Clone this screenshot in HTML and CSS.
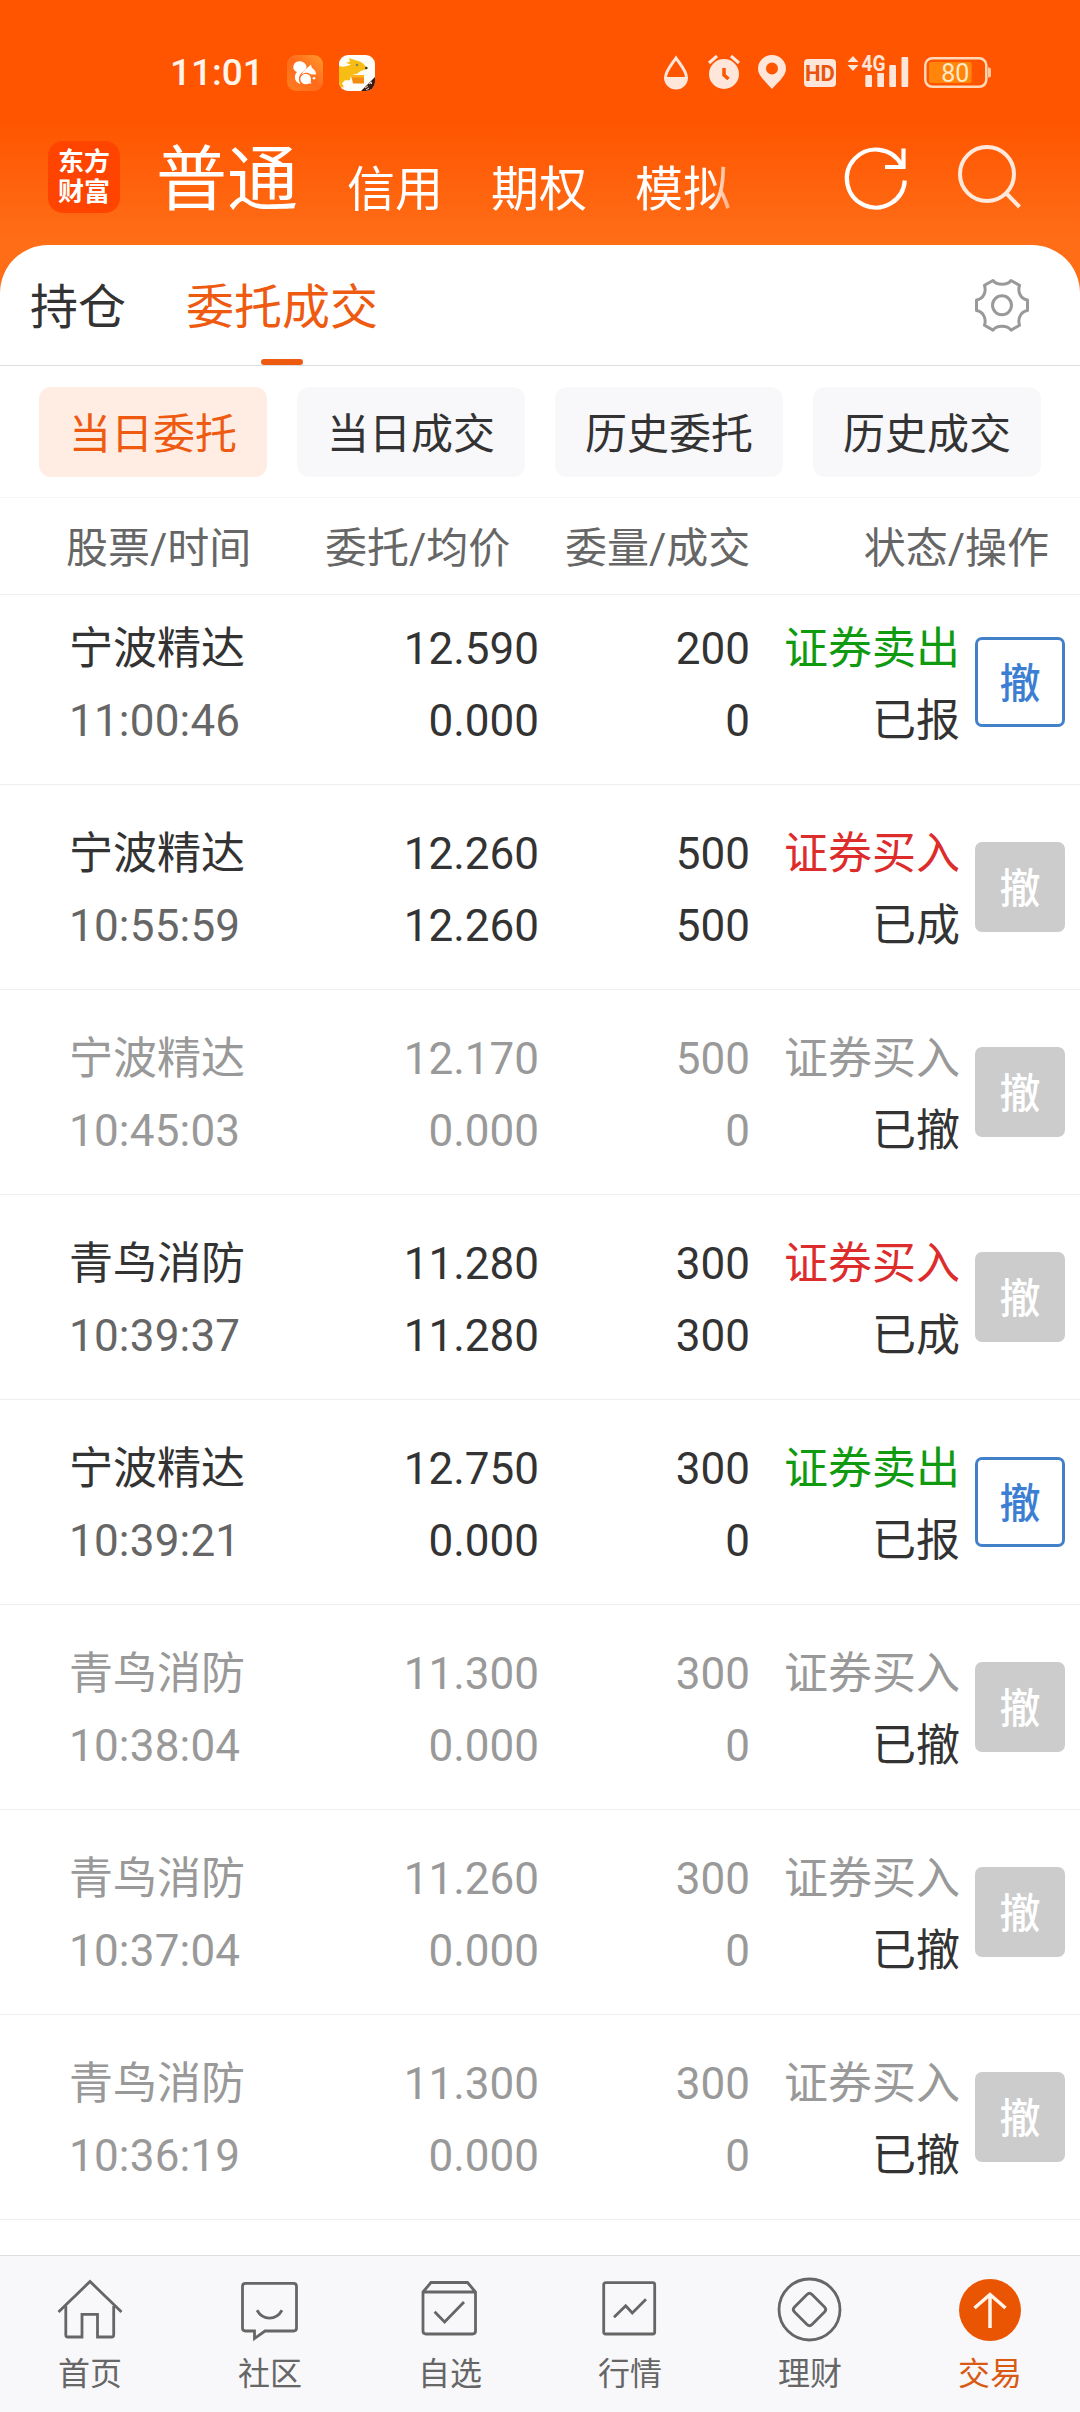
FILE: index.html
```html
<!DOCTYPE html>
<html lang="zh-CN">
<head>
    <meta charset="UTF-8">
    <meta name="viewport" content="width=device-width, initial-scale=1.0">
    <title>委托成交</title>
    <link rel="stylesheet" href="styles.css">
</head>
<body>
    <header>
        <div class="status-bar">
            <div class="status-left">
                <span class="clock">11:01</span>
                <svg class="app-icon" width="36" height="36" viewBox="0 0 36 36">
                    <defs>
                        <linearGradient id="uc" x1="1" y1="0" x2="0" y2="1">
                            <stop offset="0" stop-color="#ff9a2e"/>
                            <stop offset="0.5" stop-color="#ff6a1a"/>
                            <stop offset="1" stop-color="#ff7e20"/>
                        </linearGradient>
                    </defs>
                    <rect width="36" height="36" rx="9" fill="url(#uc)"/>
                    <path d="M6.500 14C5.500 9 9 6 13 6.300c4 .3 6.500 3.200 6.500 5.700-.5 4-8 6-7.500 12 0 2 .5 3.500 1.500 5C8 28 6 21 10 17c-1.500-.5-2.500-1.500-3.500-3z" fill="#fff"/>
                    <path d="M14.500 19.500C17 14.500 21 12.500 24 9.500c.3 2 .5 3 1.500 3.800 2 1.500 3.500 3 3.500 6.200h-5c-3-2.500-6-2.500-9.500 0z" fill="#fff"/>
                    <circle cx="18.700" cy="24" r="5.300" fill="#fff"/>
                    <path d="M18 24h5.500c1 1.500-.5 2.500 1 4.500H18z" fill="#fff"/>
                    <circle cx="27" cy="23.300" r="1.300" fill="#fff"/>
                </svg>
                <svg class="app-icon" width="36" height="36" viewBox="0 0 36 36">
                    <defs><clipPath id="tile"><rect width="36" height="36" rx="9"/></clipPath></defs>
                    <g clip-path="url(#tile)">
                        <rect width="36" height="36" fill="#fffdf8"/>
                        <path d="M0 11c4 1.500 7 .5 12-1.500L7 8l4-1.500-1-3.500 8 2.700c4 .5 7 3 10 7.500-2 2-4 2-6 2.500l-4 3-6 1.500-1 5H6l-3 3 2 4H0z" fill="#f8bd14"/>
                        <path d="M12 20h13v8.500H14z" fill="#f58a10"/>
                        <path d="M12 20h13v2.500H12z" fill="#ffb31b"/>
                        <circle cx="18" cy="10" r="1.300" fill="#8c8460"/>
                        <circle cx="27.300" cy="13" r="1.300" fill="#332"/>
                        <path d="M36 22v14H22z" fill="#3a1c12"/>
                        <path d="M26 33l3-2m-2 4l3-2m1-6l2 2m-3 0l3-2" stroke="#e8d9d0" stroke-width="1"/>
                    </g>
                </svg>
            </div>
            <div class="status-right">
                <svg width="328" height="36" viewBox="0 0 328 36" fill="#ffe6da">
                    <!-- drop -->
                    <path d="M13 3C9 9 2.500 16 2.500 22.500a10.500 10.500 0 0 0 21 0C23.500 16 17 9 13 3z" fill="none" stroke="#ffe6da" stroke-width="3"/>
                    <path d="M2 22h22a11 11 0 0 1-22 0z"/>
                    <!-- alarm -->
                    <circle cx="61" cy="19" r="15"/>
                    <path d="M46 8l8-7M76 8l-8-7" stroke="#ffe6da" stroke-width="3"/>
                    <path d="M61 13v7l4.500 4" fill="none" stroke="#ff5500" stroke-width="3.500"/>
                    <!-- location -->
                    <path fill-rule="evenodd" d="M109 34C104 28 95 21 95 14a14 14 0 0 1 28 0c0 7-9 14-14 20zM109 7.500a6 6 0 1 0 0 12 6 6 0 0 0 0-12z"/>
                    <!-- hd -->
                    <rect x="141" y="4" width="32" height="28" rx="4"/>
                    <text x="157" y="26" class="hd-text">HD</text>
                    <!-- signal -->
                    <path d="M190 1l5.500 6h-11zM190 16l5.500-6h-11z"/>
                    <text x="198.500" y="16" class="net-text" textLength="24" lengthAdjust="spacingAndGlyphs">4G</text>
                    <rect x="202.300" y="20" width="6.700" height="12" rx="1"/>
                    <rect x="214.300" y="18" width="6.700" height="14" rx="1"/>
                    <rect x="226.300" y="10" width="6.700" height="22" rx="1"/>
                    <rect x="238.500" y="2" width="6.700" height="30" rx="1"/>
                    <!-- battery -->
                    <rect x="262.300" y="3.300" width="61" height="28.500" rx="7" fill="none" stroke="#ffd9ba" stroke-width="2.500"/>
                    <rect x="266" y="7" width="42.700" height="21" rx="2" fill="#ff860a"/>
                    <path d="M325 12.500h1a2 2 0 0 1 2 2v6a2 2 0 0 1-2 2h-1z" fill="#ffc79e"/>
                    <text x="292.300" y="26.500" class="battery-text">80</text>
                </svg>
            </div>
        </div>
        <div class="account-bar">
            <div class="logo"><span>东方</span><span>财富</span></div>
            <nav class="account-nav">
                <a class="active">普通</a>
                <a>信用</a>
                <a>期权</a>
                <a>模拟</a>
            </nav>
            <svg class="refresh" width="66" height="66" viewBox="0 0 66 66" fill="none" stroke="#fff" stroke-width="4.200">
                <path d="M61.800 35.500A29 29 0 1 1 58.500 20"/>
                <path d="M60.500 3.500v18.500H42"/>
            </svg>
            <svg class="search" width="66" height="66" viewBox="0 0 66 66" fill="none" stroke="#ffe9dc" stroke-width="4">
                <circle cx="31" cy="31" r="27"/>
                <path d="M50 50l13.500 14"/>
            </svg>
        </div>
    </header>

    <main>
        <div class="tabs">
            <a>持仓</a>
            <a class="active">委托成交</a>
            <svg class="gear" width="58" height="58" viewBox="0 0 58 58" fill="none" stroke="#999" stroke-width="3" stroke-linejoin="round">
                <path d="M20 4.500C24 9.500 34 9.500 38 4.500L46.500 9.300C44.500 16 47.500 23 54.500 24V34.600C47.500 35.600 44.500 42.600 46.500 49.300L38 54.100C34 49.100 24 49.100 20 54.100L11.500 49.300C13.500 42.600 10.500 35.600 3.500 34.600V24C10.500 23 13.500 16 11.500 9.300Z"/>
                <circle cx="29" cy="29.300" r="9.500"/>
            </svg>
        </div>

        <div class="filters">
            <a class="active">当日委托</a>
            <a>当日成交</a>
            <a>历史委托</a>
            <a>历史成交</a>
        </div>

        <div class="table-head">
            <span>股票/时间</span>
            <span>委托/均价</span>
            <span>委量/成交</span>
            <span>状态/操作</span>
        </div>

        <div class="orders">
            <div class="order">
                <div class="stock"><p>宁波精达</p><p class="time">11:00:46</p></div>
                <div class="price"><p>12.590</p><p>0.000</p></div>
                <div class="amount"><p>200</p><p>0</p></div>
                <div class="state"><p class="sell">证券卖出</p><p>已报</p></div>
                <button class="cancel">撤</button>
            </div>
            <div class="order">
                <div class="stock"><p>宁波精达</p><p class="time">10:55:59</p></div>
                <div class="price"><p>12.260</p><p>12.260</p></div>
                <div class="amount"><p>500</p><p>500</p></div>
                <div class="state"><p class="buy">证券买入</p><p>已成</p></div>
                <button class="cancel" disabled>撤</button>
            </div>
            <div class="order cancelled">
                <div class="stock"><p>宁波精达</p><p class="time">10:45:03</p></div>
                <div class="price"><p>12.170</p><p>0.000</p></div>
                <div class="amount"><p>500</p><p>0</p></div>
                <div class="state"><p class="buy">证券买入</p><p>已撤</p></div>
                <button class="cancel" disabled>撤</button>
            </div>
            <div class="order">
                <div class="stock"><p>青鸟消防</p><p class="time">10:39:37</p></div>
                <div class="price"><p>11.280</p><p>11.280</p></div>
                <div class="amount"><p>300</p><p>300</p></div>
                <div class="state"><p class="buy">证券买入</p><p>已成</p></div>
                <button class="cancel" disabled>撤</button>
            </div>
            <div class="order">
                <div class="stock"><p>宁波精达</p><p class="time">10:39:21</p></div>
                <div class="price"><p>12.750</p><p>0.000</p></div>
                <div class="amount"><p>300</p><p>0</p></div>
                <div class="state"><p class="sell">证券卖出</p><p>已报</p></div>
                <button class="cancel">撤</button>
            </div>
            <div class="order cancelled">
                <div class="stock"><p>青鸟消防</p><p class="time">10:38:04</p></div>
                <div class="price"><p>11.300</p><p>0.000</p></div>
                <div class="amount"><p>300</p><p>0</p></div>
                <div class="state"><p class="buy">证券买入</p><p>已撤</p></div>
                <button class="cancel" disabled>撤</button>
            </div>
            <div class="order cancelled">
                <div class="stock"><p>青鸟消防</p><p class="time">10:37:04</p></div>
                <div class="price"><p>11.260</p><p>0.000</p></div>
                <div class="amount"><p>300</p><p>0</p></div>
                <div class="state"><p class="buy">证券买入</p><p>已撤</p></div>
                <button class="cancel" disabled>撤</button>
            </div>
            <div class="order cancelled">
                <div class="stock"><p>青鸟消防</p><p class="time">10:36:19</p></div>
                <div class="price"><p>11.300</p><p>0.000</p></div>
                <div class="amount"><p>300</p><p>0</p></div>
                <div class="state"><p class="buy">证券买入</p><p>已撤</p></div>
                <button class="cancel" disabled>撤</button>
            </div>
        </div>
    </main>

    <footer>
        <a>
            <svg viewBox="0 0 72 72">
                <path d="M4.500 38L36 7.500 67.500 38"/>
                <path d="M11.800 32v29q0 2 2 2H28V40.300h15.500V63H57.700q2 0 2-2V32"/>
            </svg>
            首页
        </a>
        <a>
            <svg viewBox="0 0 72 72">
                <path d="M11.500 9.300h48q3 0 3 3V54q0 3-3 3H31l-10.500 7.500V57h-9q-3 0-3-3V12.300q0-3 3-3z"/>
                <path d="M23 36.300c6 10.500 19 10.500 25 0"/>
            </svg>
            社区
        </a>
        <a>
            <svg viewBox="0 0 72 72">
                <path d="M9 18L17 8.500H53.500L61.500 18V57q0 3-3 3H12q-3 0-3-3zM9 18H61.500"/>
                <path d="M20.600 37.700l10 10.300L50 28"/>
            </svg>
            自选
        </a>
        <a>
            <svg viewBox="0 0 72 72">
                <rect x="9.700" y="8.700" width="51" height="51.300" rx="2"/>
                <path d="M20 43.300L31.700 31.700l6.600 7.300L52 25.300"/>
            </svg>
            行情
        </a>
        <a>
            <svg viewBox="0 0 72 72">
                <circle cx="35.500" cy="35.500" r="30.500"/>
                <path d="M33 20.500q2.500-2.500 5 0L50.500 33q2.500 2.500 0 5L38 50.500q-2.500 2.500-5 0L20.500 38q-2.500-2.500 0-5z"/>
            </svg>
            理财
        </a>
        <a class="active">
            <svg viewBox="0 0 72 72">
                <circle class="disc" cx="36" cy="36" r="31"/>
                <path d="M36 54V20.500M20.500 34L36 20.500 51.500 34"/>
            </svg>
            交易
        </a>
    </footer>
</body>
</html>
```

FILE: styles.css
```css
* {
    margin: 0;
    padding: 0;
    box-sizing: border-box;
    font-family: Roboto, "Noto Sans CJK SC", sans-serif;
}

body {
    width: 1080px;
    height: 2412px;
    display: flex;
    flex-direction: column;
    background-color: #ff6e17;
    color: #333;
    overflow: hidden;
}

svg {
    display: block;
    flex-shrink: 0;
    overflow: visible;
}

/* Header */
header {
    height: 245px;
    background: linear-gradient(#ff5500 0, #ff5500 120px, #ff6c16 235px, #ff6e17 245px);
}

.status-bar {
    height: 141px;
    padding: 55px 89px 0 170px;
    display: flex;
    justify-content: space-between;
}

.status-left {
    display: flex;
    height: 36px;
    align-items: center;
}

.clock {
    width: 117px;
    font-size: 37px;
    font-weight: 500;
    line-height: 36px;
    color: #fff3ea;
}

.app-icon {
    margin-right: 16px;
}

.hd-text {
    font-size: 22px;
    font-weight: 700;
    fill: #e8540c;
    text-anchor: middle;
}

.net-text {
    font-size: 22px;
    font-weight: 700;
}

.battery-text {
    font-size: 25px;
    fill: #ffe9c8;
    text-anchor: middle;
}

.account-bar {
    height: 72px;
    padding: 0 0 0 48px;
    display: flex;
}

.logo {
    width: 72px;
    height: 72px;
    padding-top: 6px;
    border-radius: 15px;
    background-color: #ff4400;
    color: #fff;
    font-size: 26px;
    font-weight: 700;
    line-height: 30px;
    text-align: center;
}

.logo span {
    display: block;
}

.account-nav {
    width: 688px;
    padding: 3px 0 0 36px;
    display: flex;
    align-items: baseline;
    gap: 48px;
    line-height: 72px;
    color: #fff;
    -webkit-mask-image: linear-gradient(90deg, #000 590px, rgba(0,0,0,0.4) 612px);
    mask-image: linear-gradient(90deg, #000 590px, rgba(0,0,0,0.4) 612px);
}

.account-nav a {
    font-size: 48px;
}

.account-nav a:not(.active) {
    transform: translate(1px, 2px);
}

.account-nav .active {
    font-size: 71px;
}

.refresh {
    margin: 4px 0 0 35px;
}

.search {
    margin: 2px 0 0 47px;
}

/* Panel */
main {
    flex: 1;
    background-color: #fff;
    border-radius: 48px 48px 0 0;
    overflow: hidden;
}

.tabs {
    height: 121px;
    padding: 0 49px 0 30px;
    display: flex;
    align-items: center;
    gap: 60px;
    border-bottom: 1px solid #ddd;
}

.tabs a {
    position: relative;
    height: 120px;
    font-size: 48px;
    line-height: 125px;
}

.tabs .active {
    color: #ee5a10;
}

.tabs .active::after {
    content: "";
    position: absolute;
    left: 50%;
    bottom: 0;
    width: 42px;
    height: 6px;
    margin-left: -21px;
    border-radius: 3px;
    background-color: #ee5a10;
}

.gear {
    margin-left: auto;
}

.filters {
    height: 132px;
    padding: 21px 39px 0;
    display: grid;
    grid-template-columns: repeat(4, 1fr);
    gap: 30px;
    border-bottom: 1px solid #f5f5f5;
}

.filters a {
    height: 90px;
    border-radius: 12px;
    background-color: #f8f8fa;
    font-size: 42px;
    line-height: 95px;
    text-align: center;
}

.filters .active {
    background-color: #ffede4;
    color: #ee5a10;
}

.table-head {
    height: 97px;
    padding: 0 31px 0 66px;
    display: grid;
    grid-template-columns: 259px 240px 1fr auto;
    border-bottom: 1px solid #eee;
    font-size: 42px;
    line-height: 101px;
    color: #666;
}

/* Orders */
.orders {
    margin-top: -15px;
}

.order {
    height: 205px;
    padding: 0 15px 0 69px;
    display: grid;
    grid-template-columns: 200px 270px 211px 210px 90px;
    justify-content: start;
    align-items: center;
    border-bottom: 1px solid #eee;
    font-size: 44px;
    line-height: 72px;
}

.stock,
.price,
.amount,
.state {
    padding-top: 5px;
}

.stock p {
    white-space: nowrap;
}

.price,
.amount,
.state {
    text-align: right;
}

.time {
    color: #666;
    letter-spacing: 0.2px;
}

.sell {
    color: #0f9a0f;
}

.buy {
    color: #dc2c2c;
}

.cancelled,
.cancelled .time,
.cancelled .buy {
    color: #999;
}

.cancelled .state p:last-child {
    color: #333;
}

.cancel {
    width: 90px;
    height: 90px;
    margin-left: 15px;
    padding-top: 5px;
    border: 3px solid #4280c8;
    border-radius: 7px;
    background-color: #fff;
    color: #3c7fd2;
    font-size: 41px;
    font-weight: 500;
    line-height: 79px;
}

.cancel:disabled {
    border-color: #ccc;
    background-color: #ccc;
    color: #fff;
}

/* Bottom navigation */
footer {
    height: 157px;
    padding-top: 18px;
    display: grid;
    grid-template-columns: repeat(6, 1fr);
    border-top: 1px solid #ddd;
    background-color: #f8f8fa;
}

footer a {
    display: flex;
    flex-direction: column;
    align-items: center;
    font-size: 32px;
    line-height: 56px;
    color: #666;
}

footer svg {
    width: 72px;
    height: 72px;
    fill: none;
    stroke: #666;
    stroke-width: 2.800;
}

footer .active {
    color: #d85a14;
}

footer .active svg {
    stroke: #fff3ea;
    stroke-width: 3.500;
}

footer .disc {
    fill: #ea5504;
    stroke: none;
}
```
